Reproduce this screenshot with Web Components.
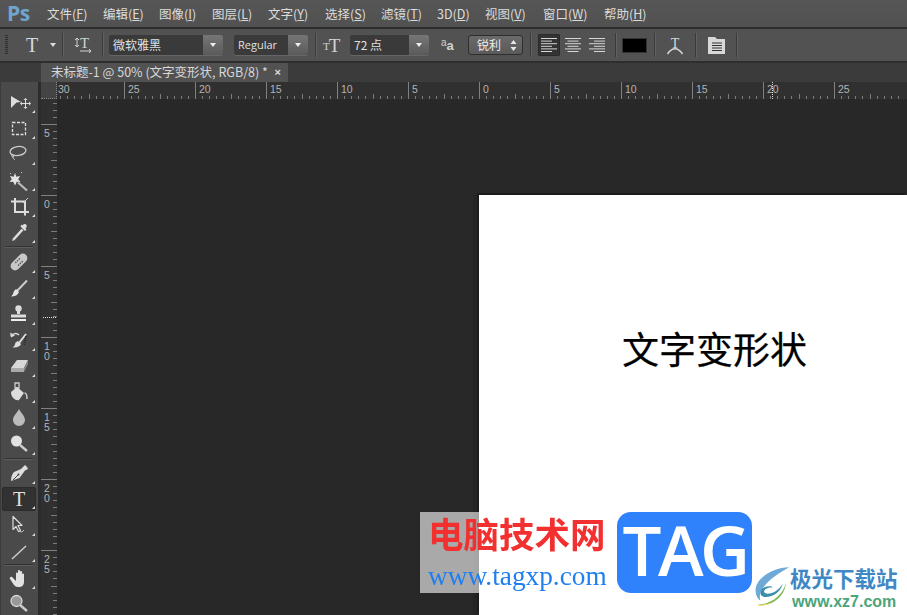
<!DOCTYPE html>
<html lang="zh"><head><meta charset="utf-8"><title>Ps</title>
<style>
html,body{margin:0;padding:0;width:907px;height:615px;overflow:hidden;background:#282828}
body{font-family:"Noto Sans CJK SC","Liberation Sans",sans-serif}
</style></head><body>
<ps-app></ps-app>
<script>
const FONT='"Noto Sans CJK SC","Noto Sans",sans-serif';
function def(name,css,html){
  customElements.define(name,class extends HTMLElement{
    constructor(){super();const r=this.attachShadow({mode:'open'});
      r.innerHTML='<style>'+css+'</style>'+(typeof html==='function'?html(this):html);
    }
  });
}
def('ps-menubar',`:host{display:flex;align-items:center;height:27px;background:linear-gradient(#565656,#515151);border-bottom:2px solid #2c2c2c;color:#dcdcdc;font:12.5px/27px ${FONT}}
.ps{font:bold 21px/27px "Open Sans","Liberation Sans",sans-serif;color:#6fa6d0;width:47px;padding-left:7px;box-sizing:border-box;letter-spacing:-.5px;flex:none}
.m{flex:none;white-space:nowrap}u{text-underline-offset:1px}`,
()=>{const it=[['文件','F',47],['编辑','E',103],['图像','I',159],['图层','L',212],['文字','Y',268],['选择','S',325],['滤镜','T',381],['3D','D',437],['视图','V',485],['窗口','W',543],['帮助','H',604]];
 return '<span class="ps">Ps</span>'+it.map((a,i)=>{const nx=i<it.length-1?it[i+1][2]-a[2]:50;return `<span class="m" style="width:${nx}px">${a[0]}(<u>${a[1]}</u>)</span>`}).join('')});

def('ps-select',`:host{display:inline-flex;flex:none;height:20px;border-radius:2px;box-sizing:border-box;background:#3a3a3a;color:#e0e0e0;font:12px/20px ${FONT};box-shadow:0 1px 0 #666}
:host([latin]){font:11px/20px "Open Sans",sans-serif}
.t{flex:1;padding-left:4px;white-space:nowrap;overflow:hidden}
.b{width:20px;background:linear-gradient(#767676,#5a5a5a);border-radius:0 2px 2px 0;position:relative;flex:none}
.b:after{content:"";position:absolute;left:7px;top:8px;border:3px solid transparent;border-top:4px solid #eee;border-bottom:0}`,
'<span class="t"><slot></slot></span><span class="b"></span>');

def('ps-stepper',`:host{display:inline-flex;flex:none;height:20px;border-radius:3px;background:linear-gradient(#6a6a6a,#5a5a5a);border:1px solid #2e2e2e;box-sizing:border-box;color:#eee;font:12px/18px ${FONT};position:relative;padding-left:8px}
svg{position:absolute;right:5px;top:4px}`,
'<slot></slot><svg width="7" height="11"><path d="M3.5 0l3 4h-6zM3.5 11l3-4h-6z" fill="#e8e8e8"/></svg>');

const I='fill="none" stroke="#d2d2d2"';
def('ps-options',`:host{display:flex;align-items:center;height:32px;background:#525252;border-bottom:2px solid #2e2e2e;position:relative}
.sep{width:1px;height:24px;background:#3a3a3a;box-shadow:1px 0 0 #626262;flex:none}
.grip{width:3px;height:20px;flex:none;background:repeating-linear-gradient(#2d2d2d 0 1px,transparent 1px 2px);margin-left:5px}
.i{flex:none;display:block}
.ft{font-family:"Liberation Serif",serif;color:#d8d8d8;flex:none}
.al{width:22px;height:22px;flex:none;display:flex;align-items:center;justify-content:center;border-radius:2px}
.al.on{background:#333;box-shadow:inset 0 0 0 1px #2a2a2a}
.sw{width:25px;height:15px;background:#000;border:1px solid #333;flex:none;box-sizing:border-box}
.car{width:0;height:0;border:3px solid transparent;border-top:4px solid #ddd;border-bottom:0;flex:none}
.tt{display:flex;align-items:flex-start;flex:none;font-family:"Liberation Serif",serif;color:#d2d2d2;line-height:1;height:18px}
.tt span{display:block}
.aa{display:flex;align-items:flex-end;flex:none;font:11px/1 "Liberation Sans",sans-serif;color:#d2d2d2;height:14px}`,
()=>{
 const lines=(off)=>{let s='';for(let k=0;k<6;k++){const x=off==1?(k%2?2.5:0):off==2?(k%2?5:0):0;const ww=k%2?11:16;s+=`<path d="M${x} ${k*2.6+.5}h${ww}" stroke="#d6d6d6"/>`}return `<svg width="16" height="14">${s}</svg>`};
 return `<span class="grip"></span>
 <span class="ft" style="font-size:20px;line-height:20px;margin-left:17px;width:14px;text-align:center">T</span>
 <span class="car" style="margin-left:11px"></span><span class="sep" style="margin-left:6px"></span>
 <svg class="i" style="margin-left:11px" width="20" height="20" viewBox="0 0 20 20"><path d="M3 3v9M1 5l2-2 2 2M1 10l2 2 2-2M6 16h11M15 14l2 2-2 2" ${I}/><text x="6" y="13" font-family="Liberation Serif" font-size="15" fill="#d2d2d2">T</text></svg>
 <span class="sep" style="margin-left:8px"></span>
 <ps-select style="margin-left:6px;width:114px">微软雅黑</ps-select>
 <ps-select latin style="margin-left:11px;width:74px">Regular</ps-select>
 <span class="sep" style="margin-left:7px"></span>
 <span class="tt" style="margin-left:7px;width:17px"><span style="font-size:11px;margin-top:5px">T</span><span style="font-size:19px;margin-left:-1px">T</span></span>
 <ps-select style="margin-left:10px;width:79px">72 点</ps-select>
 <span class="aa" style="margin-left:12px;width:14px"><span style="font-size:10px;position:relative;top:-4px">a</span><span style="font-size:13px;font-weight:bold">a</span></span>
 <ps-stepper style="margin-left:13px;width:55px">锐利</ps-stepper>
 <span class="sep" style="margin-left:7px"></span>
 <span class="al on" style="margin-left:7px">${lines(0)}</span>
 <span class="al" style="margin-left:2px">${lines(1)}</span>
 <span class="al" style="margin-left:2px">${lines(2)}</span>
 <span class="sep" style="margin-left:7px"></span>
 <span class="sw" style="margin-left:6px"></span>
 <span class="sep" style="margin-left:7px"></span>
 <svg class="i" style="margin-left:11px" width="18" height="20" viewBox="0 0 18 20"><text x="4.700" y="12.500" font-family="Liberation Serif" font-size="14" fill="#d8d8d8">T</text><path d="M1.500 19c2-3 4-5.200 7.500-5.200s5.500 2.200 7.500 5.200" fill="none" stroke="#d8d8d8" stroke-width="1.400"/></svg>
 <span class="sep" style="margin-left:11px"></span>
 <svg class="i" style="margin-left:12px" width="17" height="18" viewBox="0 0 17 18"><path d="M0 1h7l2 2h8v15H0z" fill="#d8d8d8"/><path d="M4 7h10M4 9.5h10M4 12h10M4 14.500h10" stroke="#333"/></svg>
 <span class="sep" style="margin-left:11px"></span>`});

def('ps-tabbar',`:host{display:flex;height:19px;background:#3b3b3b;box-sizing:border-box;padding-left:41px;color:#d8d8d8;font:12.5px/18px ${FONT};flex:none}
.tab{width:247px;background:#525252;display:flex;padding-left:10px;box-sizing:border-box;white-space:nowrap;position:relative}
.x{position:absolute;right:7px;top:0;font:bold 11px/18px "Liberation Sans",sans-serif;color:#ddd}`,
'<div class="tab">未标题-1 @ 50% (文字变形状, RGB/8) *<span class="x">×</span></div>');

const TOOLS={
 move:`<path d="M5 7l10 6-4.500.5L5 19z" fill="#ddd"/><path d="M19.500 10v9M15 14.500h9" stroke="#ddd"/><path d="M19.500 9l-2 2h4zM19.500 20l-2-2h4zM14 14.500l2-2v4zM25 14.500l-2-2v4z" fill="#ddd"/>`,
 marquee:`<rect x="6.500" y="7.500" width="13" height="12" fill="none" stroke="#ddd" stroke-width="1.300" stroke-dasharray="3 1.500"/>`,
 lasso:`<ellipse cx="12" cy="10" rx="8" ry="4.500" transform="rotate(-8 12 10)" fill="none" stroke="#ccc" stroke-width="1.300"/><path d="M6 13c-1 3 1 4 2 2 .5-1-1-1.500-1 .5s1 3 2 3" fill="none" stroke="#ccc"/>`,
 wand:`<path d="M9 6l1.300 3.700 3.700-.7-1.800 3.200 2.300 2.800-3.700-.3L9 18.500l-1.800-3.800-3.700.3 2.300-2.800L4 9l3.700.7z" fill="#e4e4e4"/><path d="M12 15.500l9 8" stroke="#bbb" stroke-width="2.200"/><path d="M15 6l1-1M4 6l1 1" stroke="#ccc"/>`,
 crop:`<path d="M9 5v14h14M5 8.500h14v14" fill="none" stroke="#ddd" stroke-width="2"/><path d="M17 10l5-5" stroke="#ccc"/>`,
 eyedropper:`<path d="M7.500 20.500l9-10" stroke="#ddd" stroke-width="2.600" fill="none"/><path d="M6 22l1-3 2 2z" fill="#ccc"/><path d="M14.500 7.500l4.500 4.500 1.500-1.500-1-1c2-2 1.500-4-.5-4.500-1-.2-2 .5-2.500 1.500l-1-1z" fill="#ddd"/>`,
 heal:`<g transform="rotate(-45 13 13)"><rect x="3" y="8.500" width="20" height="9" rx="4.500" fill="#c8c8c8"/><g fill="#555"><circle cx="10.500" cy="11" r=".8"/><circle cx="13" cy="11" r=".8"/><circle cx="15.500" cy="11" r=".8"/><circle cx="10.500" cy="15" r=".8"/><circle cx="13" cy="15" r=".8"/><circle cx="15.500" cy="15" r=".8"/></g></g>`,
 brush:`<path d="M21 5.500L11 16" stroke="#ccc" stroke-width="2"/><path d="M10 14l3 3c-1 3-4 4.500-8 4.500 2-1.500 2-3 3-5.500z" fill="#e4e4e4"/>`,
 stamp:`<circle cx="12.500" cy="7.500" r="3.200" fill="#ddd"/><path d="M11 9h3v4h-3z" fill="#ddd"/><path d="M5 13.500h15v3H5z" fill="#ddd"/><path d="M5 18h15v2H5z" fill="#eee"/>`,
 history:`<path d="M5 9c2-3 6-3 8-1" fill="none" stroke="#ddd" stroke-width="1.500"/><path d="M4 5.500l1 5 4-2z" fill="#ddd"/><path d="M20 7l-7 9" stroke="#ddd" stroke-width="2"/><path d="M12 14l3 3c-1 2.500-4 4-8.500 3.500 2-1 2.500-3 3-5z" fill="#ddd"/><path d="M20 9l-2 9" stroke="#222" stroke-dasharray="1 1" stroke-width="1.500"/>`,
 eraser:`<path d="M11 7h11l-4 8H5z" fill="#d8d8d8"/><path d="M5 15h13v4H5z" fill="#aaa"/><path d="M18 15l4-8v4l-4 8z" fill="#888"/>`,
 bucket:`<path d="M9 4h4v5h-4z" fill="none" stroke="#ccc" stroke-width="1.300"/><path d="M5 13l6-5 7 6-5 7c-3 1-8-2-8-8z" fill="#ddd"/><path d="M18.500 14c2 0 2.500 2 2.500 6" stroke="#ccc" stroke-width="1.500" fill="none"/>`,
 blur:`<path d="M13 4c2 4 6 7 6 11a6 6 0 0 1-12 0c0-4 4-7 6-11z" fill="#bcbcbc"/>`,
 dodge:`<circle cx="10.500" cy="10" r="5.500" fill="#e2e2e2"/><path d="M14 14l7 6" stroke="#ccc" stroke-width="2.400"/>`,
 pen:`<path d="M19 5l2 2 1 2-3 1.500-5.500 7.500L5 21c0-4 1-7 3-9l7-3z" fill="#ddd"/><path d="M7 20l5-5" stroke="#444"/><circle cx="12.500" cy="14.500" r="1" fill="#444"/>`,
 path:`<path d="M7 4.500v13l3-3 2.500 5 2-1-2.500-5h4z" fill="#444" stroke="#ddd" stroke-width="1.200" stroke-linejoin="round"/><path d="M13 19.500l3 .5 2-2" fill="none" stroke="#bbb"/>`,
 line:`<path d="M6 21L20 8" stroke="#ccc" stroke-width="1.500"/>`,
 hand:`<path d="M6 12l4 4V8.500c0-1.500 1.800-1.500 2 0V14V6c0-1.500 2-1.500 2 0v8V7c0-1.500 2-1.500 2 0v8V9.500c0-1.500 2-1.500 2 0V17c0 3-2 5-5 5h-1c-3 0-4-2-5-3.500L4 14c-1-1.500 1-3 2-2z" fill="#e2e2e2"/>`,
 zoom:`<circle cx="10.500" cy="10" r="5.500" fill="#9a9a9a" stroke="#d6d6d6" stroke-width="1.300"/><path d="M14 14l7 6" stroke="#ccc" stroke-width="2.400"/>`
};
def('ps-tool',`:host{display:flex;height:26px;width:34px;margin-left:2px;position:relative;justify-content:center;align-items:center;box-sizing:border-box;flex:none}
:host([on]){background:#323232;border-radius:3px;height:24px;margin-top:1px;margin-bottom:1px;box-shadow:inset 0 0 0 1px #2b2b2b}
svg{display:block}
.tx{font:20px/24px "Liberation Serif",serif;color:#e0e0e0}
.c{position:absolute;right:1px;bottom:2px;width:0;height:0;border-left:3px solid transparent;border-bottom:3px solid #ddd}`,
h=>{const n=h.getAttribute('i');
 const g=n==='type'?'<span class="tx">T</span>':`<svg width="26" height="26" viewBox="0 0 26 26">${TOOLS[n]}</svg>`;
 return g+(h.hasAttribute('nc')?'':'<span class="c"></span>')});

def('ps-toolbar',`:host{display:flex;flex-direction:column;width:38px;background:#4a4a4a;flex:none;box-sizing:border-box;overflow:hidden;box-shadow:inset 1px 0 0 #3a3a3a}
.head{height:10px;background:#353535;color:#b8b8b8;font:bold 9px/9px "Liberation Sans",sans-serif;padding-left:4px;letter-spacing:-1px;box-sizing:border-box;flex:none}
.grip{height:5px;flex:none;margin:3px 7px 8px 9px;background:repeating-linear-gradient(90deg,#2a2a2a 0 1px,transparent 1px 2px)}
.sep{height:1px;flex:none;background:#333;margin:1px 5px 1px 5px;box-shadow:0 1px 0 #5c5c5c}`,
()=>{const tool=n=>`<ps-tool i="${n}"></ps-tool>`;
 return `<div class="head">››</div><div class="grip"></div>`+
 ['move','marquee','lasso','wand','crop','eyedropper'].map(tool).join('')+'<div class="sep" style="margin-bottom:2px"></div>'+
 ['heal','brush','stamp','history','eraser','bucket','blur','dodge'].map(tool).join('')+'<div class="sep"></div>'+
 '<ps-tool i="pen"></ps-tool><ps-tool i="type" on></ps-tool><ps-tool i="path"></ps-tool><ps-tool i="line"></ps-tool><div class="sep" style="margin:0 5px"></div><ps-tool i="hand"></ps-tool><ps-tool i="zoom" nc></ps-tool>'});

def('ps-hruler',`:host{display:block;height:17px;background:#303030;overflow:hidden}svg{display:block}`,
()=>{let s='';const O=479-57;
 for(let i=-60;i<60;i++){const x=Math.round(O+i*7.1)+.5;if(x>850)continue;const k=((i%10)+10)%10;
  if(k===0){if(x>=0)s+=`<path d="M${x} 0v17" stroke="#808080"/>`;if(x<800){const v=Math.abs(i/10)*5;s+=`<text x="${Math.max(x+3.5,1)}" y="11" fill="#b4b4b4" font-size="10.500" font-family="Liberation Sans">${v}</text>`}}
  else if(x>=0)s+=`<path d="M${x} ${k===5?12:14}V17" stroke="#7c7c7c"/>`}
 s+=`<path d="M715.500 0v17" stroke="#ddd" stroke-dasharray="1 1"/>`;
 return `<svg width="850" height="17">${s}</svg>`});

def('ps-vruler',`:host{display:block;width:16px;flex:none;background:#303030;position:relative;overflow:hidden}svg{display:block}
.n{position:absolute;left:3px;width:6px;font:10.500px/10px "Liberation Sans",sans-serif;color:#b4b4b4;word-break:break-all;white-space:normal}`,
()=>{let s='',t='';const O=195-99;
 for(let i=-14;i<80;i++){const y=Math.round(O+i*7.1)+.5;if(y<0||y>520)continue;const k=((i%10)+10)%10;
  if(k===0){s+=`<path d="M0 ${y}h16" stroke="#808080"/>`;t+=`<span class="n" style="top:${y+3}px">${Math.abs(i/10)*5}</span>`}
  else s+=`<path d="M${k===5?10:12} ${y}H16" stroke="#7c7c7c"/>`}
 s+=`<path d="M2 218.500h14" stroke="#ddd" stroke-dasharray="1 1"/>`;
 return `<svg width="16" height="516">${s}</svg>`+t});

def('ps-canvas',`:host{display:flex;flex:1;background:#282828;padding:96px 0 0 422px;box-sizing:border-box;min-width:0;overflow:hidden}
.doc{flex:1;background:#fff;box-shadow:-2px -2px 0 #1c1c1c,-6px 0 0 #242424;padding-top:130px;height:420px;color:#000;font:400 37px/50px ${FONT};-webkit-text-stroke:.25px #000;box-sizing:border-box}
.doc span{display:block;margin-left:143px;margin-top:-2px;white-space:nowrap}`,
'<div class="doc"><span>文字变形状</span></div>');

def('ps-watermark',`:host{display:block;position:absolute;left:420px;top:512px;width:487px;height:103px;pointer-events:none}
.box{position:absolute;left:0;top:0;width:59px;height:81px;background:rgba(255,255,255,.6)}
.r{position:absolute;left:8px;top:1px;font:bold 35.500px/40px "Noto Sans CJK SC",sans-serif;color:#f23030;white-space:nowrap;filter:blur(.3px)}
.w{position:absolute;left:8px;top:47px;font:400 27.300px/34px "Liberation Serif",serif;color:#1f7ff0;white-space:nowrap;filter:blur(.3px)}
.tag{position:absolute;left:197px;top:0;width:135px;height:81px;border-radius:14px;background:#2f82fb;color:#fff;font:600 69px/75px "Open Sans","Liberation Sans",sans-serif;text-align:center;letter-spacing:-3.500px}
.logo{position:absolute;left:330px;top:53px}
.j{position:absolute;left:370px;top:52px;font:bold 21.500px/28px "Noto Sans CJK SC",sans-serif;color:#3f88c5;white-space:nowrap}
.x{position:absolute;left:372px;top:80px;font:bold 16px/20px "Liberation Sans",sans-serif;color:#4ca57a;white-space:nowrap}`,
`<div class="box"></div><div class="r">电脑技术网</div><div class="w">www.tagxp.com</div><div class="tag">TAG</div>
<svg class="logo" width="44" height="42" viewBox="0 0 48 54"><path d="M46 3C26 3 5 16 3 30c-1 8 3 14 6 16C6 36 12 22 46 3z" fill="#6ea9d8"/><path d="M38 24c-3 11-14 18-24 17-6-1-6-7-2-11 4-3 11-4 13-1-6-1-12 2-11 6 2 4 16 2 24-11z" fill="#3b8fa8"/><path d="M42 23C38 38 24 50 6 51c14 3 34-8 36-28z" fill="#77b84a"/><path d="M4 52c6 1 14 0 20-3-6 1-14 2-20 3z" fill="#efd66b"/></svg>
<div class="j">极光下载站</div><div class="x">www.xz7.com</div>`);

def('ps-app',`:host{display:flex;flex-direction:column;width:907px;height:615px;position:relative;overflow:hidden;background:#282828}
.gap{width:3px;background:#2c2c2c;flex:none}
.work{flex:1;display:flex;flex-direction:column;min-width:0}
.top{display:flex;flex:none}
.corner{width:16px;height:17px;flex:none;background:#444;box-sizing:border-box;border-right:1px dotted #888;border-bottom:1px dotted #888}
.body{display:flex;flex:1;min-height:0}
.topline{display:flex;flex:1;min-height:0}`,
`<ps-menubar></ps-menubar><ps-options></ps-options>
<div class="topline"><ps-toolbar></ps-toolbar><div class="gap"></div>
<div class="work"><ps-tabbar style="margin-left:-41px"></ps-tabbar>
<div class="top"><div class="corner"></div><ps-hruler style="flex:1;min-width:0"></ps-hruler></div>
<div class="body"><ps-vruler></ps-vruler><ps-canvas></ps-canvas></div></div></div>
<ps-watermark></ps-watermark>`);
</script>
</body></html>
